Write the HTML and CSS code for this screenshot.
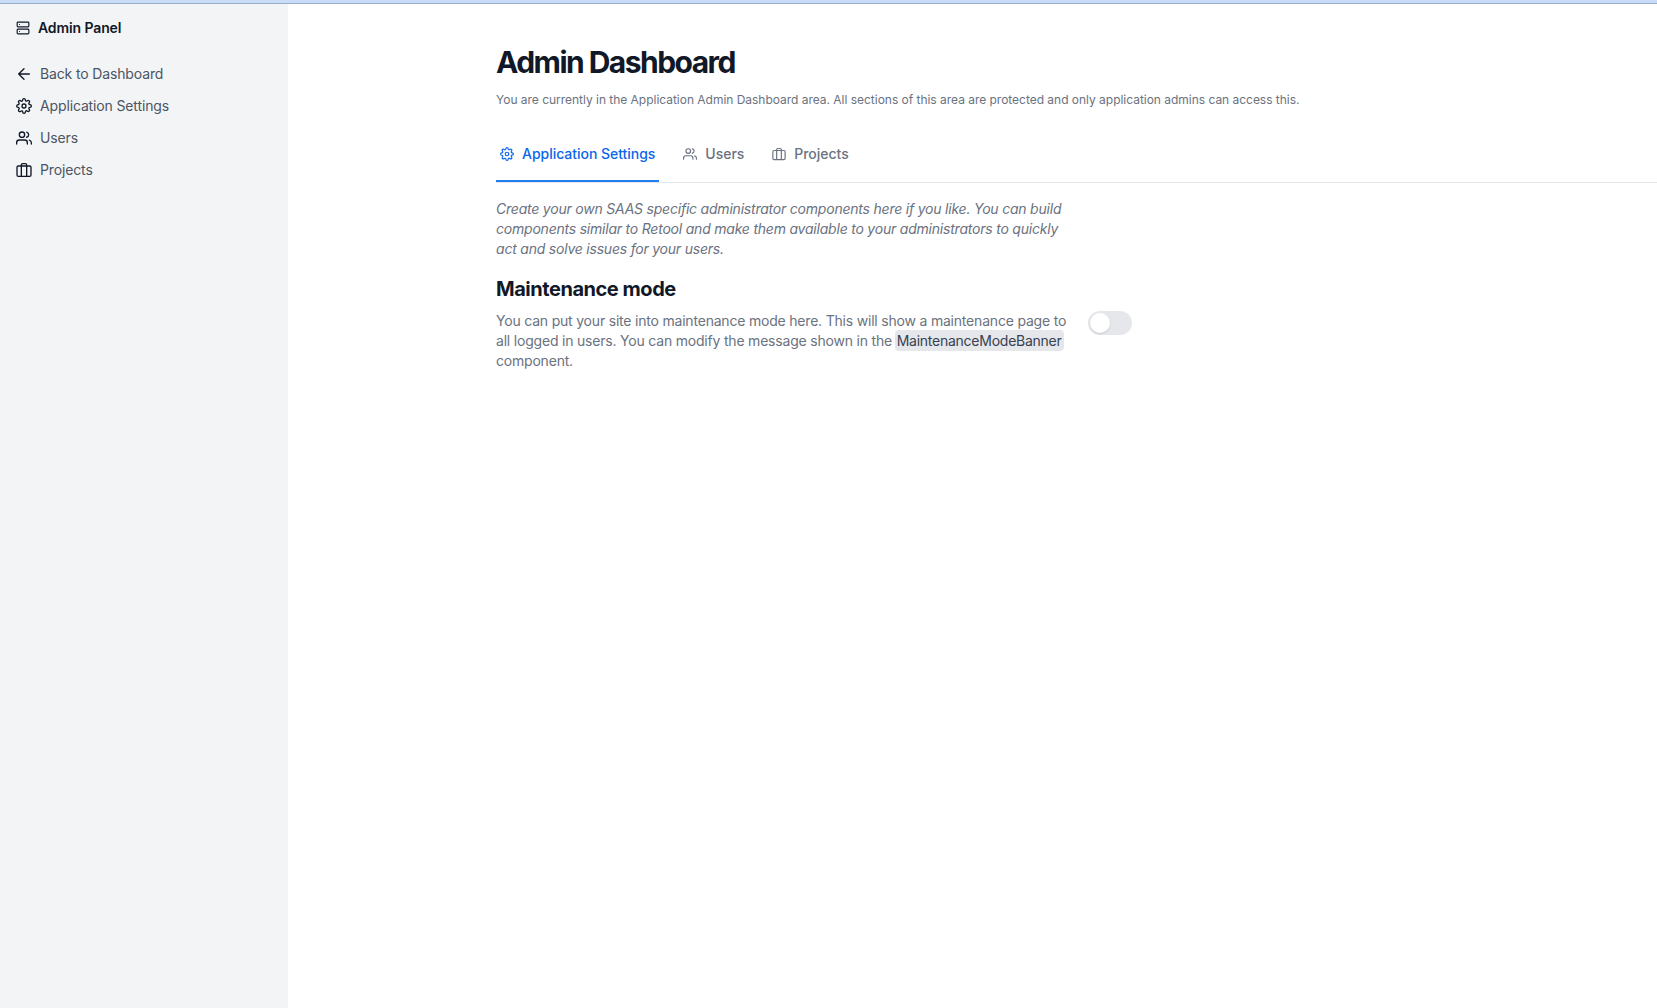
FILE: index.html
```html
<!DOCTYPE html>
<html lang="en">
<head>
<meta charset="utf-8">
<title>Admin Dashboard</title>
<link rel="stylesheet" href="styles.css">
</head>
<body>
<svg class="sprite" aria-hidden="true">
  <symbol id="i-server" viewBox="0 0 24 24"><rect x="2" y="2" width="20" height="8" rx="1.5"/><rect x="2" y="14" width="20" height="8" rx="1.5"/><path d="M6 6h.01M6 18h.01"/></symbol>
  <symbol id="i-back" viewBox="0 0 24 24"><path d="M20 12H4M12 20l-8-8 8-8"/></symbol>
  <symbol id="i-settings" viewBox="0 0 24 24"><circle cx="12" cy="12" r="3"/><path d="M19.4 15a1.65 1.65 0 0 0 .33 1.82l.06.06a2 2 0 0 1 0 2.83 2 2 0 0 1-2.83 0l-.06-.06a1.65 1.65 0 0 0-1.82-.33 1.65 1.65 0 0 0-1 1.51V21a2 2 0 0 1-2 2 2 2 0 0 1-2-2v-.09A1.65 1.65 0 0 0 9 19.4a1.65 1.65 0 0 0-1.82.33l-.06.06a2 2 0 0 1-2.83 0 2 2 0 0 1 0-2.83l.06-.06a1.65 1.65 0 0 0 .33-1.82 1.65 1.65 0 0 0-1.51-1H3a2 2 0 0 1-2-2 2 2 0 0 1 2-2h.09A1.65 1.65 0 0 0 4.6 9a1.65 1.65 0 0 0-.33-1.82l-.06-.06a2 2 0 0 1 0-2.83 2 2 0 0 1 2.83 0l.06.06a1.65 1.65 0 0 0 1.82.33H9a1.65 1.65 0 0 0 1-1.51V3a2 2 0 0 1 2-2 2 2 0 0 1 2 2v.09a1.65 1.65 0 0 0 1 1.51 1.65 1.65 0 0 0 1.82-.33l.06-.06a2 2 0 0 1 2.83 0 2 2 0 0 1 0 2.83l-.06.06a1.65 1.65 0 0 0-.33 1.82V9a1.65 1.65 0 0 0 1.51 1H21a2 2 0 0 1 2 2 2 2 0 0 1-2 2h-.09a1.65 1.65 0 0 0-1.51 1z"/></symbol>
  <symbol id="i-users" viewBox="0 0 24 24"><path d="M17 21v-2a4 4 0 0 0-4-4H5a4 4 0 0 0-4 4v2"/><circle cx="9" cy="7" r="4"/><path d="M23 21v-2a4 4 0 0 0-3-3.87M16 3.13a4 4 0 0 1 0 7.75"/></symbol>
  <symbol id="i-briefcase" viewBox="0 0 24 24"><rect x="1.5" y="6" width="21" height="15.5" rx="2"/><path d="M16 21V4.5a2 2 0 0 0-2-2h-4a2 2 0 0 0-2 2V21"/></symbol>
</svg>
<div class="topbar"></div>
<div class="layout">
  <aside class="sidebar">
    <div class="brand"><svg class="icon"><use href="#i-server"/></svg><span>Admin Panel</span></div>
    <nav class="menu">
      <a class="menu-item"><svg class="icon"><use href="#i-back"/></svg><span>Back to Dashboard</span></a>
      <a class="menu-item"><svg class="icon"><use href="#i-settings"/></svg><span>Application Settings</span></a>
      <a class="menu-item"><svg class="icon"><use href="#i-users"/></svg><span>Users</span></a>
      <a class="menu-item"><svg class="icon"><use href="#i-briefcase"/></svg><span>Projects</span></a>
    </nav>
  </aside>
  <main class="content">
    <h1 class="title">Admin Dashboard</h1>
    <p class="subtitle">You are currently in the Application Admin Dashboard area. All sections of this area are protected and only application admins can access this.</p>
    <nav class="tabs">
      <a class="tab tab-active"><svg class="icon"><use href="#i-settings"/></svg><span>Application Settings</span></a>
      <a class="tab"><svg class="icon"><use href="#i-users"/></svg><span>Users</span></a>
      <a class="tab"><svg class="icon"><use href="#i-briefcase"/></svg><span>Projects</span></a>
    </nav>
    <p class="intro">Create your own SAAS specific administrator components here if you like. You can build<br>components similar to Retool and make them available to your administrators to quickly<br>act and solve issues for your users.</p>
    <h2 class="heading">Maintenance mode</h2>
    <div class="setting">
      <p class="description">You can put your site into maintenance mode here. This will show a maintenance page to<br>all logged in users. You can modify the message shown in the <code class="code">MaintenanceModeBanner</code><br>component.</p>
      <button class="switch" role="switch" aria-checked="false" aria-label="Maintenance mode"><span class="thumb"></span></button>
    </div>
  </main>
</div>
</body>
</html>
```
FILE: styles.css
```css
* { box-sizing: border-box; }
body {
  margin: 0;
  height: 100vh;
  display: flex;
  flex-direction: column;
  overflow: hidden;
  background: #fff;
  color: #111827;
  font: 14px/20px Inter, sans-serif;
}
h1, h2, p { margin: 0; }
.sprite { display: none; }
.icon {
  width: 16px;
  height: 16px;
  flex: none;
  fill: none;
  stroke: currentColor;
  stroke-width: 2;
  stroke-linecap: round;
  stroke-linejoin: round;
}
.topbar { flex: none; height: 4px; background: #c9dcf7; border-bottom: 1px solid #97adca; }
.layout { flex: 1; display: flex; min-height: 0; }
.sidebar { width: 288px; flex: none; padding: 14px 16px; background: #f3f4f6; }
.brand { display: flex; align-items: center; gap: 8px; font-weight: 600; letter-spacing: -0.11px; }
.brand .icon { width: 14px; height: 14px; }
.menu { display: flex; flex-direction: column; gap: 12px; margin-top: 26px; }
.menu-item { display: flex; align-items: center; gap: 8px; letter-spacing: -0.14px; }
.menu-item span { color: #4b5563; }
.content { flex: 1; min-width: 0; padding: 40px 0 0 208px; }
.title { font-size: 30px; line-height: 36px; font-weight: 700; letter-spacing: -1.53px; }
.subtitle { margin-top: 12px; font-size: 12px; line-height: 16px; letter-spacing: -0.022px; color: #6b7280; }
.tabs { display: flex; gap: 20px; margin-top: 20px; height: 55px; border-bottom: 1px solid #e5e7eb; }
.tab {
  display: flex;
  align-items: center;
  gap: 8px;
  padding: 0 4px;
  border-bottom: 2px solid transparent;
  color: #6b7280;
  font-weight: 500;
  letter-spacing: -0.03px;
}
.tab .icon { width: 14px; height: 14px; }
.tab-active { color: #0a66ea; border-color: #1f7fee; }
.intro { margin-top: 16px; color: #6b7280; font-style: italic; letter-spacing: -0.215px; }
.heading { margin-top: 16px; font-size: 20px; line-height: 28px; font-weight: 650; letter-spacing: -0.46px; }
.setting { display: flex; gap: 16px; margin-top: 8px; }
.description { width: 576px; color: #6b7280; letter-spacing: -0.2px; white-space: nowrap; }
.code { margin-left: -1px; padding: 2px; border-radius: 4px; background: #e5e7eb; color: #374151; font: inherit; letter-spacing: -0.25px; }
.switch { width: 44px; height: 24px; padding: 2px; border: 0; border-radius: 12px; background: #e5e7eb; }
.thumb { display: block; width: 20px; height: 20px; border-radius: 50%; background: #fff; box-shadow: 0 1px 2px #0002; }
```
